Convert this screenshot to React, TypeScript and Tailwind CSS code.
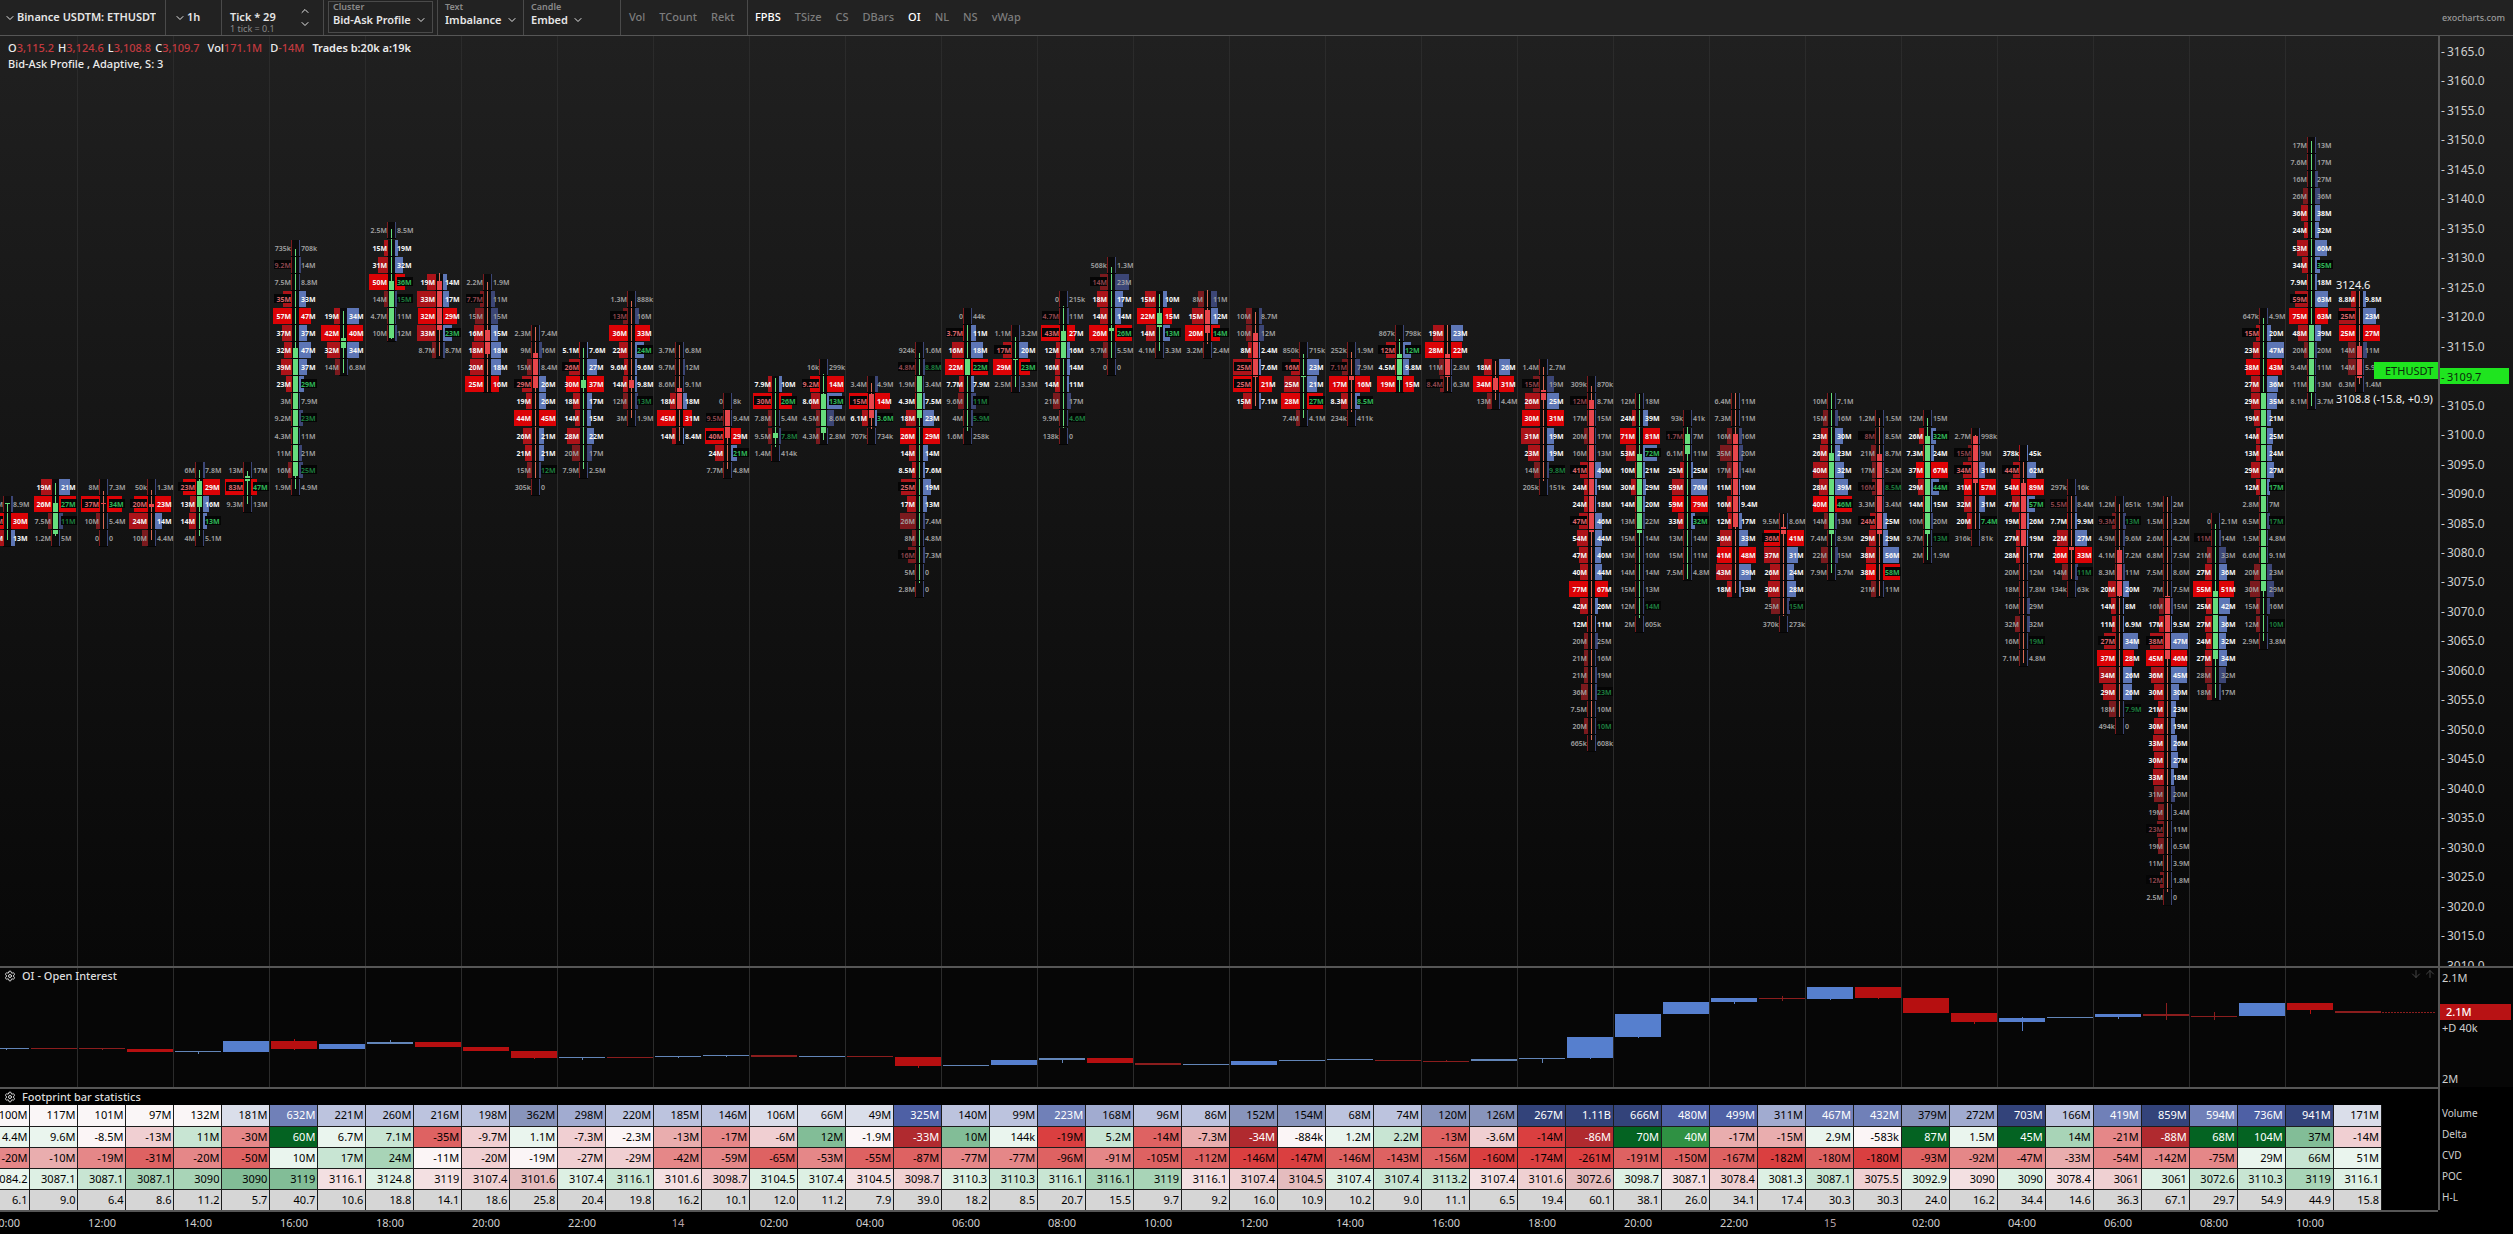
import { ArrowDown, ArrowUp, ChevronDown, ChevronUp, Settings } from "lucide-react";

const CELL = 48; // one hourly bar
const FIRST = -18; // left edge of the first, half hidden bar
const ROW = 17.09; // height of one price bucket
const ROW_TOP = 109; // centre of the highest bucket

const cellLeft = (i: number) => FIRST + i * CELL;
const barCenter = (i: number) => cellLeft(i) + 25;

interface Bar {
  row: number;
  up: boolean;
  body: [number, number];
  wick: [number, number];
  cells: string;
}

const bar = (
  row: number,
  dir: "u" | "d",
  b0: number,
  b1: number,
  w0: number,
  w1: number,
  cells: string
): Bar => ({ row, up: dir === "u", body: [b0, b1], wick: [w0, w1], cells });

/**
 * bid/ask per bucket, in millions unless the value ends with k
 * "*" point of control, "." outside the value area, "!" imbalance
 */
const BARS: Bar[] = [
  bar(21, "u", 467, 468, 467, 504, ".6.1/8.9 *8.2!/30 14/13"),
  bar(20, "u", 467, 498, 447, 500, "19/21 *26/27! .7.5/11! .1.2/5"),
  bar(20, "d", 467, 468, 455, 493, ".8/7.3 *37!/34! .10/5.4 .0/0"),
  bar(20, "d", 468, 471, 454, 504, ".50k/1.3 *20!/23 24/14 .10/4.4"),
  bar(19, "u", 445, 471, 434, 500, ".6/7.8 *23!/29 13/16 14/13! .4/5.1"),
  bar(19, "u", 440, 445, 435, 468, ".13/17 *83!/47! .9.3/13"),
  bar(6, "u", 312, 440, 213, 453, ".735k/708k .9.2!/14 .7.5/8.8 35!/33 *57/47 37/37 32/47 39/37 23/29! .3/7.9 .9.2/23! .4.3/11 .11/21 .16/25! .1.9/4.9"),
  bar(10, "u", 302, 312, 275, 337, "19/34 *42/40 32/34 .14/6.8"),
  bar(5, "u", 245, 302, 193, 303, ".2.5/8.5 15/19 31/32 *50/36! .14/15! .4.7/11 .10/12"),
  bar(8, "d", 245, 294, 237, 320, "19/14 33/17 *32/29 33/23! .8.7/8.7"),
  bar(8, "d", 294, 318, 246, 356, ".2.2/1.9 .7.7!/11 .15/15 16/15 18/18 20/18 *25/16"),
  bar(11, "d", 317, 352, 291, 443, ".2.3/7.4 .9/16 .15/8.4 29!/26 19/26 *44/45 26/21 21/21 .15/12! .305k/0"),
  bar(12, "u", 344, 352, 312, 433, "5.1/7.6 26!/27 *30/37 18/17 14/15 28/22 .20/17 .7.9/2.5"),
  bar(9, "d", 344, 352, 265, 382, ".1.3/888k .13!/16 *36/33 22/24! 9.6/9.6 14/9.8 .12/13! .3/1.9"),
  bar(12, "d", 352, 373, 309, 405, ".3.7/6.8 .9.7/12 .8.6/9.1 18/18 *45/31 14/8.4"),
  bar(15, "d", 374, 402, 374, 433, ".0/8k .9.5!/9.4 *40!/29 24/21! .7.7/4.8"),
  bar(14, "u", 397, 402, 342, 411, "7.9/10 *30!/26! .7.8/5.4 .9.5/7.8! .1.4/414k"),
  bar(13, "u", 358, 397, 338, 404, ".16k/299k *9.2!/14 8.6/13! .4.5/8.6 .4.3/2.8"),
  bar(14, "d", 358, 382, 347, 393, ".3.4/4.9 *15!/14 6.1/3.6! .707k/734k"),
  bar(12, "u", 340, 382, 317, 547, ".924k/1.6 .4.8!/8.8! .1.9/3.4 4.3/7.5 18/23 *26/29 14/14 8.5/7.6 25!/19 17/13 .26/7.4 .8/4.8 .16!/7.3 .5/0 .2.8/0"),
  bar(10, "u", 323, 339, 289, 395, ".0/44k 3.7!/11 16/18 *22/22! 7.7/7.9 .9.6/11! .4/5.9! .1.6/258k"),
  bar(11, "u", 322, 324, 301, 351, ".1.1/3.2 17!/20 *29/23! .2.5/3.3"),
  bar(9, "u", 295, 322, 270, 392, ".0/215k .4.7!/11 *43!/27 12/16 16/14 14/11 .21/17 .9.9/4.6! .138k/0"),
  bar(7, "u", 292, 295, 231, 322, ".568k/1.3 .14!/23 18/17 14/14 *26/26! .9.7/5.5 .0/0"),
  bar(9, "u", 277, 291, 258, 315, "15/10 *22/15 14/13! .4.1/3.3"),
  bar(9, "d", 274, 297, 254, 308, ".8/11 15/12 *20/14! .3.2/2.4"),
  bar(10, "d", 297, 341, 276, 370, ".10/8.7 .10/12 8/2.4 25!/7.6 *25!/21 15/7.1"),
  bar(12, "u", 339, 341, 318, 382, ".850k/715k 16!/23 25/21 *28/27! .7.4/4.1"),
  bar(12, "d", 340, 344, 316, 376, ".252k/1.9 .7.1!/7.9 *17/16 8.3/8.5! .234k/411k"),
  bar(11, "u", 318, 344, 303, 356, ".867k/798k 12!/12! 4.5/9.8 *19/15"),
  bar(11, "d", 318, 341, 289, 355, "19/23 *28/22 .11/2.8 .8.4!/6.3"),
  bar(13, "d", 342, 354, 325, 364, "18/26 *34/31 .13/4.4"),
  bar(13, "d", 354, 364, 331, 445, ".1.4/2.7 .15!/19 26/25 *30/31 31/19 23/19 .14/9.8! .205k/151k"),
  bar(14, "d", 364, 496, 350, 704, ".309k/870k .12!/8.7 .17/15 .20/17 .16/13 41!/40 24/19 24/18 47!/46 54/44 47/40 40/44 *77/67 42/26 12/11 .20/25 .21/16 .21/19 .36/23! .7.5/10 .20/10! .665k/608k"),
  bar(15, "u", 418, 497, 358, 582, ".12/18 24/39 *71/81 53/72! 10/21 30/29 14/20 .13/22 .15/14 .13/10 .14/14 .15/13 .12/14! .2/605k"),
  bar(16, "u", 398, 418, 391, 543, ".93k/41k .1.7!/7 .6.1/11 25/25 59/76 *59/79 33/32! .13/14 .15/11 .7.5/4.8"),
  bar(15, "d", 398, 491, 357, 557, ".6.4/11 .7.3/11 .16/16 .35/20 .17/14 11/10 16/9.4 12/17 36/33 *41/48 43/39 18/13"),
  bar(22, "d", 491, 498, 478, 580, ".9.5/8.6 *36!/41 37/31 26/24 30/28 .25/15! .370k/273k"),
  bar(15, "u", 417, 498, 357, 537, ".10/7.1 .15/16 23/30 26/23 40/32 28/39 *40/46! .14/13 .7.4/8.9 .22/15 .7.9/3.7"),
  bar(16, "d", 418, 498, 382, 560, ".1.2/1.5 .8!/8.5 .21/8.7 .17/5.2 .16!/8.5! .3.3/3.4 24!/25 29/29 38/56 *38/58! .21/11"),
  bar(16, "u", 400, 498, 382, 524, ".12/15 26/32! 7.3/24 *37/67 29/44! 14/15 .10/20 .9.7/13! .2/1.9"),
  bar(17, "d", 400, 447, 399, 493, ".2.7/998k .15!/9 34!/31 *31/57 32/31 20/7.4! .316k/81k"),
  bar(18, "d", 447, 510, 425, 627, "378k/45k 44!/62 *54/89 47/57! 19/26 27/19 28/17 .20/12 .18/7.8 .16/29 .32/32 .16/19! .7.1/4.8"),
  bar(20, "d", 511, 514, 459, 543, ".297k/16k .5.5!/8.4 7.7/9.9 22/27 *26/33 .14/11! .134k/63k"),
  bar(21, "d", 514, 560, 468, 682, ".1.2/651k .9.3!/13! .4.9/9.6 .4.1/7.2 .8.3/11 20/20 14/8 11/6.9 27!/34 *37/28 34/26 29/26 .18/7.9! .494k/0"),
  bar(21, "d", 560, 623, 461, 856, ".1.9/2 .1.5/3.2 .2.6/4.2 .6.8/7.5 .7.5/8.6 .7/7.5 .16/15 17/9.5 38!/47 *45/46 36/45 30/30 21/23 30/19 33/26 30/27 33/18 .31/20 .19/3.4 .23!/11 .19/6.5 .11/3.9 .12!/1.8 .2.5/0"),
  bar(22, "u", 555, 623, 488, 662, ".0/2.1 .11!/14 .21/33 27/36 *55/51 25/42 27/36 24/32 27/34 .28/32 .18/17"),
  bar(10, "u", 357, 555, 282, 605, ".647k/4.9 15!/20 23/47 *38/43 27/36 29/35 19/21 14/25 13/24 29/27 12/17! .2.8/7 .6.5/17! .1.5/4.8 .6.6/9.1 .20/23 .30/29 .15/16 .12/10! .2.9/3.8"),
  bar(0, "u", 289, 356, 105, 370, ".17/13 .7.6/17 .16/27 .26/36 36/38 24/32 53/60 34/35! 7.9/18 59!/63 *75/63 48/39 .20/20 .9.4/11 .11/13 .8.1/3.7"),
  bar(9, "d", 310, 342, 255, 348, "8.8/9.8 25!/23 *25/27 .14/11 .14/5.9 .6.3/1.4"),
];

// open interest candles: direction, top, bottom, wick top, wick bottom
type Candle = ["u" | "d", number, number, number?, number?];

const OI: Candle[] = [
  ["u", 80, 81, 80, 82], ["d", 80, 81], ["d", 80, 81, 80, 82], ["d", 81, 84], ["u", 83, 84, 83, 86],
  ["u", 73, 84], ["d", 73, 81, 71, 82], ["u", 76, 81], ["u", 74, 76, 72, 76], ["d", 74, 79],
  ["d", 79, 83], ["d", 83, 90, 83, 91], ["u", 89, 90, 89, 92], ["d", 89, 90], ["u", 88, 89, 88, 90],
  ["u", 87, 88, 87, 89], ["d", 87, 89], ["u", 88, 89], ["d", 88, 89], ["d", 89, 98, 89, 100],
  ["u", 97, 98], ["u", 92, 97], ["u", 90, 92, 90, 95], ["d", 90, 95], ["d", 95, 97],
  ["u", 96, 97], ["u", 93, 97], ["u", 92, 93], ["u", 91, 92], ["d", 92, 93],
  ["d", 93, 94, 92, 94], ["u", 91, 93], ["u", 90, 91, 90, 95], ["u", 69, 90, 69, 91], ["u", 46, 69, 46, 70],
  ["u", 34, 46], ["u", 30, 34, 30, 36], ["d", 30, 31, 28, 33], ["u", 19, 31, 19, 32], ["d", 19, 30, 19, 31],
  ["d", 30, 45], ["d", 45, 54, 45, 56], ["u", 50, 54, 49, 63], ["u", 49, 50], ["u", 46, 49, 46, 51],
  ["d", 46, 48, 35, 52], ["d", 48, 49, 44, 52], ["u", 35, 48], ["d", 35, 42, 35, 46], ["d", 43, 45],
];

const TONES: Record<string, string> = {
  v0: "bg-[#faf6f7] text-black",
  v1: "bg-[#dadeea] text-black",
  v2: "bg-[#bcc3de] text-black",
  v3: "bg-[#a1abd0] text-black",
  v4: "bg-[#8894bb] text-black",
  v5: "bg-[#7080b8] text-white",
  v6: "bg-[#4e60a5] text-white",
  v7: "bg-[#33437a] text-white",
  g0: "bg-[#eaf5ee] text-black",
  g1: "bg-[#c8e5d3] text-black",
  g2: "bg-[#a8d4b7] text-black",
  g3: "bg-[#82bd97] text-black",
  g5: "bg-[#2f9143] text-white",
  g6: "bg-[#046322] text-white",
  r0: "bg-[#fbf5f6] text-black",
  r1: "bg-[#f0cfd2] text-black",
  r2: "bg-[#e9adae] text-black",
  r3: "bg-[#e58788] text-black",
  r4: "bg-[#de6262] text-black",
  r5: "bg-[#da3f40] text-black",
  r6: "bg-[#b02a2f] text-white",
  p0: "bg-[#f3e0e2] text-black",
  p1: "bg-[#efd0d2] text-black",
  p2: "bg-[#e4bcbe] text-black",
  q0: "bg-[#ddf0e4] text-black",
  h0: "bg-[#d6d6d6] text-black",
};

const STATS = [
  {
    label: "Volume",
    values:
      "100M:v0 117M:v0 101M:v0 97M:v0 132M:v0 181M:v1 632M:v5 221M:v2 260M:v2 216M:v2 198M:v2 362M:v4 298M:v3 220M:v2 185M:v2 146M:v2 106M:v1 66M:v1 49M:v1 325M:v6 140M:v2 99M:v2 223M:v5 168M:v3 96M:v2 86M:v2 152M:v4 154M:v4 68M:v2 74M:v2 120M:v4 126M:v4 267M:v7 1.11B:v7 666M:v7 480M:v6 499M:v6 311M:v3 467M:v5 432M:v5 379M:v4 272M:v3 703M:v7 166M:v2 419M:v5 859M:v7 594M:v5 736M:v6 941M:v7 171M:v1",
  },
  {
    label: "Delta",
    values:
      "4.4M:g0 9.6M:g0 -8.5M:r0 -13M:r1 11M:g1 -30M:r3 60M:g6 6.7M:g0 7.1M:g1 -35M:r4 -9.7M:r1 1.1M:g0 -7.3M:r1 -2.3M:r0 -13M:r2 -17M:r3 -6M:r1 12M:g3 -1.9M:r0 -33M:r6 10M:g3 144k:g0 -19M:r5 5.2M:g1 -14M:r4 -7.3M:r2 -34M:r6 -884k:r0 1.2M:g0 2.2M:g1 -13M:r4 -3.6M:r1 -14M:r5 -86M:r6 70M:g6 40M:g5 -17M:r2 -15M:r2 2.9M:g0 -583k:r0 87M:g6 1.5M:g0 45M:g6 14M:g2 -21M:r3 -88M:r6 68M:g6 104M:g6 37M:g3 -14M:r1",
  },
  {
    label: "CVD",
    values:
      "-20M:r3 -10M:r2 -19M:r3 -31M:r4 -20M:r3 -50M:r4 10M:g0 17M:g1 24M:g2 -11M:r0 -20M:r1 -19M:r0 -27M:r1 -29M:r1 -42M:r3 -59M:r3 -65M:r4 -53M:r3 -55M:r4 -87M:r4 -77M:r3 -77M:r3 -96M:r4 -91M:r3 -105M:r4 -112M:r4 -146M:r5 -147M:r5 -146M:r4 -143M:r4 -156M:r4 -160M:r5 -174M:r5 -261M:r5 -191M:r4 -150M:r4 -167M:r4 -182M:r5 -180M:r4 -180M:r5 -93M:r4 -92M:r3 -47M:r3 -33M:r2 -54M:r3 -142M:r3 -75M:r3 29M:g0 66M:g1 51M:g0",
  },
  {
    label: "POC",
    values:
      "3084.2:g0 3087.1:q0 3087.1:g1 3087.1:g2 3090:g2 3090:g3 3119:g3 3116.1:p0 3124.8:q0 3119:p0 3107.4:p1 3101.6:p2 3107.4:q0 3116.1:g1 3101.6:p0 3098.7:p1 3104.5:q0 3107.4:q0 3104.5:p0 3098.7:p1 3110.3:q0 3110.3:g1 3116.1:g1 3116.1:g2 3119:g2 3116.1:p0 3107.4:p1 3104.5:p2 3107.4:q0 3107.4:g1 3113.2:g1 3107.4:p0 3101.6:p1 3072.6:p2 3098.7:q0 3087.1:p0 3078.4:p1 3081.3:q0 3087.1:g1 3075.5:p1 3092.9:q0 3090:p0 3090:q0 3078.4:p0 3061:p1 3061:q0 3072.6:g1 3110.3:g1 3119:g2 3116.1:q0",
  },
  {
    label: "H-L",
    values:
      "6.1:h0 9.0:h0 6.4:h0 8.6:h0 11.2:h0 5.7:h0 40.7:h0 10.6:h0 18.8:h0 14.1:h0 18.6:h0 25.8:h0 20.4:h0 19.8:h0 16.2:h0 10.1:h0 12.0:h0 11.2:h0 7.9:h0 39.0:h0 18.2:h0 8.5:h0 20.7:h0 15.5:h0 9.7:h0 9.2:h0 16.0:h0 10.9:h0 10.2:h0 9.0:h0 11.1:h0 6.5:h0 19.4:h0 60.1:h0 38.1:h0 26.0:h0 34.1:h0 17.4:h0 30.3:h0 30.3:h0 24.0:h0 16.2:h0 34.4:h0 14.6:h0 36.3:h0 67.1:h0 29.7:h0 54.9:h0 44.9:h0 15.8:h0",
  },
];

const TIMES = [
  "10:00", "12:00", "14:00", "16:00", "18:00", "20:00", "22:00", "14", "02:00", "04:00", "06:00", "08:00", "10:00",
  "12:00", "14:00", "16:00", "18:00", "20:00", "22:00", "15", "02:00", "04:00", "06:00", "08:00", "10:00",
];

const PRICES = Array.from({ length: 32 }, (_, i) => 3165 - i * 5).filter((p) => p !== 3110);
const priceY = (p: number) => Math.round(15 + (3165 - p) * 5.894);

const OVERLAYS = ["Vol", "TCount", "Rekt"];

const INDICATORS = [
  ["FPBS", true], ["TSize", false], ["CS", false], ["DBars", false], ["OI", true], ["NL", false], ["NS", false], ["vWap", false],
] as const;

const unit = (v: string) => (v === "0" || v.endsWith("k") ? v : `${v}M`);
const amount = (v: string) => (v.endsWith("k") ? parseFloat(v) / 1000 : parseFloat(v));

function GridLines() {
  return (
    <g fill="#2b2b2b">
      {Array.from({ length: 24 }, (_, i) => (
        <rect key={i} x={cellLeft(2 + i * 2) - 1} y={0} width={1} height="100%" />
      ))}
    </g>
  );
}

function Footprint({ data, index }: { data: Bar; index: number }) {
  const cx = barCenter(index);
  const rows = data.cells.split(" ").map((cell) => {
    const poc = cell.startsWith("*");
    const out = cell.startsWith(".");
    const [bid, ask] = cell.replace(/^[*.]/, "").split("/");
    return {
      poc,
      out,
      bid: bid.replace("!", ""),
      ask: ask.replace("!", ""),
      bidHot: bid.endsWith("!"),
      askHot: ask.endsWith("!"),
    };
  });
  const max = Math.max(...rows.flatMap((r) => [amount(r.bid), amount(r.ask)]));
  const size = (v: string) => {
    const part = amount(v) / Math.max(max, 12);
    return Math.round(17 * part ** 1.7);
  };
  const candle = data.up ? "#66dd7c" : "#e8454b";
  const wick = data.up ? "#66dd7c" : "#d86a55";

  return (
    <g>
      {rows.map((r, i) => {
        const y = Math.round(ROW_TOP + (data.row + i) * ROW);
        const left = size(r.bid);
        const right = size(r.ask);
        const text = r.out ? "#a3a3a3" : "#f6f6f6";
        const weight = r.out ? 600 : 700;
        return (
          <g key={i} fontWeight={weight}>
            <rect x={cx - 4} y={y - 8} width={8} height={16} fill="#0b0b0b" />
            <rect x={cx - 4 - (left > 1 ? left + 1 : 0)} y={y - 8} width={left > 1 ? left + 2 : 1} height={16} fill={r.poc ? "#dc0306" : r.out ? "#7b1a1e" : "#ac1319"} />
            <rect x={cx + 4} y={y - 8} width={Math.max(right, 1)} height={16} fill={r.poc && right > 1 ? "#dc0306" : r.out ? "#3c4676" : "#5d76b6"} />
            {r.bidHot && <rect x={cx - 21} y={y - 5} width={17} height={9} fill="#050505" />}
            {r.askHot && <rect x={cx + 6} y={y - 5} width={16} height={9} fill="#050505" />}
            <text x={cx - 4} y={y + 3} textAnchor="end" fill={r.bidHot ? (r.out ? "#964a52" : "#d8666a") : text}>
              {unit(r.bid)}
            </text>
            <text x={cx + 6} y={y + 3} fill={r.askHot ? (r.out ? "#1f8442" : "#2fb558") : text}>
              {unit(r.ask)}
            </text>
          </g>
        );
      })}
      <rect x={cx} y={data.wick[0]} width={1} height={data.wick[1] - data.wick[0]} fill={wick} />
      <rect x={cx - 2} y={data.body[0]} width={5} height={data.body[1] - data.body[0]} fill={candle} />
      {rows.map((_, i) => (
        <rect key={i} x={cx - 4} y={Math.round(ROW_TOP + (data.row + i) * ROW) + 8} width={9} height={1} fill="#050505" />
      ))}
    </g>
  );
}

function FootprintChart() {
  return (
    <svg className="block h-full w-full" fontSize={7}>
      <GridLines />
      {BARS.map((b, i) => (
        <Footprint key={i} data={b} index={i} />
      ))}
      <g fontSize={11} fill="#f2f2f2">
        <text x={2336} y={253}>3124.6</text>
        <text x={2336} y={367}>3108.8 (-15.8, +0.9)</text>
      </g>
      <rect x={2374} y={326} width={80} height={17} fill="#1fe41f" />
      <text x={2385} y={339} fontSize={11} fill="#0b2a0b">ETHUSDT</text>
    </svg>
  );
}

function PriceAxis() {
  return (
    <svg className="block h-full w-full" fontSize={12} fill="#cfcfcf">
      {PRICES.map((p) => (
        <text key={p} x={1} y={priceY(p) + 5}>
          - <tspan x={7}>{p.toFixed(1)}</tspan>
        </text>
      ))}
      <rect x={0} y={332} width={69} height={16} fill="#1fe41f" />
      <text x={1} y={345} fill="#0b2a0b" fontSize={11}>
        - <tspan x={7}>3109.7</tspan>
      </text>
    </svg>
  );
}

function OpenInterestChart() {
  return (
    <svg className="block h-full w-full">
      <GridLines />
      {OI.map(([dir, top, bottom, w0, w1], i) => {
        const x = cellLeft(i) + 1;
        const thin = bottom - top < 3;
        const fill = dir === "u" ? (thin ? "#6285b8" : "#567fce") : thin ? "#8b1d1d" : "#b60f10";
        return (
          <g key={i} fill={fill}>
            <rect x={x} y={top} width={46} height={bottom - top} />
            {w0 !== undefined && w1 !== undefined && <rect x={x + 23} y={w0} width={1} height={w1 - w0} />}
          </g>
        );
      })}
      <line x1={2382} x2={2435} y1={44.5} y2={44.5} stroke="#8b1d1d" strokeDasharray="2 1" />
    </svg>
  );
}

function ToolSelect({ label, value, boxed }: { label: string; value: string; boxed?: boolean }) {
  return (
    <label className={`flex h-8 flex-col px-1 leading-3 ${boxed ? "border border-[#4a4a4a]" : "border border-transparent"}`}>
      <span className="text-[9px] leading-[10px] text-[#8a8a8a]">{label}</span>
      <span className="flex items-center gap-1">
        <select className="appearance-none bg-transparent leading-4 outline-none">
          <option>{value}</option>
        </select>
        <ChevronDown className="h-3 w-3" />
      </span>
    </label>
  );
}

function Toolbar() {
  return (
    <header className="flex h-9 shrink-0 items-stretch border-b border-[#565656] bg-[#222222] text-[11px] font-semibold text-[#e6e6e6]">
      <label className="flex w-[166px] items-center gap-px border-r border-[#4a4a4a] pl-1">
        <ChevronDown className="h-3 w-3" />
        <select aria-label="Symbol" className="appearance-none bg-transparent outline-none">
          <option>Binance USDTM: ETHUSDT</option>
        </select>
      </label>
      <label className="flex w-14 items-center gap-px border-r border-[#4a4a4a] pl-2">
        <ChevronDown className="h-3 w-3" />
        <select aria-label="Timeframe" className="appearance-none bg-transparent outline-none">
          <option>1h</option>
        </select>
      </label>
      <div className="flex w-[102px] items-stretch justify-between border-r border-[#4a4a4a] pr-3 pl-2">
        <div className="flex flex-col justify-end leading-3">
          <span>Tick * 29</span>
          <span className="text-[9px] font-normal text-[#8a8a8a]">1 tick = 0.1</span>
        </div>
        <div className="flex flex-col justify-center gap-px">
          <button aria-label="More ticks"><ChevronUp className="h-3 w-3" /></button>
          <button aria-label="Fewer ticks"><ChevronDown className="h-3 w-3" /></button>
        </div>
      </div>
      <div className="w-[114px] border-r border-[#4a4a4a] px-1 pt-px">
        <ToolSelect label="Cluster" value="Bid-Ask Profile" boxed />
      </div>
      <div className="w-[86px] border-r border-[#4a4a4a] pt-px pl-0.5">
        <ToolSelect label="Text" value="Imbalance" />
      </div>
      <div className="w-[97px] border-r border-[#4a4a4a] pt-px pl-0.5">
        <ToolSelect label="Candle" value="Embed" />
      </div>
      <nav className="flex w-[127px] items-center gap-[14px] border-r border-[#4a4a4a] pl-2 font-medium">
        {OVERLAYS.map((name) => (
          <button key={name} className="text-[#7d7d7d]">{name}</button>
        ))}
      </nav>
      <nav className="flex items-center gap-[14px] pl-[7px] font-medium">
        {INDICATORS.map(([name, on]) => (
          <button key={name} aria-pressed={on} className={on ? "text-white" : "text-[#7d7d7d]"}>{name}</button>
        ))}
      </nav>
      <a href="#" className="mr-2 ml-auto self-center text-[9px] font-medium text-[#9a9a9a]">exocharts.com</a>
    </header>
  );
}

function Legend() {
  const values = [["O", "3,115.2"], ["H", "3,124.6"], ["L", "3,108.8"], ["C", "3,109.7"]];
  return (
    <div className="absolute top-1 left-2 text-[11px] leading-4 font-medium text-[#ececec]">
      <p className="flex gap-1">
        {values.map(([k, v]) => (
          <span key={k}>{k}<span className="text-[#c23a3f]">{v}</span></span>
        ))}
        <span className="ml-1">Vol<span className="text-[#c23a3f]">171.1M</span></span>
        <span className="ml-1">D<span className="text-[#c23a3f]">-14M</span></span>
        <span className="ml-1 font-semibold">Trades b:20k a:19k</span>
      </p>
      <p>Bid-Ask Profile , Adaptive, S: 3</p>
    </div>
  );
}

export default function App() {
  return (
    <div className="flex h-screen flex-col overflow-hidden bg-black font-['Noto_Sans','Open_Sans',sans-serif]">
      <Toolbar />

      {/* Price pane */}
      <section className="flex min-h-0 flex-1 bg-linear-to-b from-[#202020] to-[#080808]">
        <div className="relative min-w-0 flex-1 overflow-hidden">
          <FootprintChart />
          <Legend />
        </div>
        <div className="w-[75px] shrink-0 border-l-2 border-[#565656]">
          <PriceAxis />
        </div>
      </section>

      {/* Open interest pane */}
      <section className="flex h-[121px] shrink-0 border-t-2 border-[#565656] bg-[#060606]">
        <div className="relative min-w-0 flex-1 overflow-hidden">
          <OpenInterestChart />
          <h2 className="absolute top-0 left-1 flex items-center gap-1.5 text-[11px] leading-4 font-medium text-[#dcdcdc]">
            <Settings className="h-3 w-3" />
            OI - Open Interest
          </h2>
          <div className="absolute top-0 right-0.5 flex gap-0.5 text-[#444444]">
            <ArrowDown className="h-3 w-3" />
            <ArrowUp className="h-3 w-3" />
          </div>
        </div>
        <div className="flex w-[75px] shrink-0 flex-col border-l-2 border-[#565656] text-[11px] leading-4 text-[#cfcfcf]">
          <span className="pt-0.5 pl-0.5">2.1M</span>
          <span className="mt-[18px] mr-0.5 bg-[#b81214] pl-1.5 font-medium text-white">2.1M</span>
          <span className="pl-0.5">+D 40k</span>
          <span className="mt-auto pl-0.5">2M</span>
        </div>
      </section>

      {/* Footprint statistics pane */}
      <section className="flex h-[123px] shrink-0">
        <div className="min-w-0 flex-1 overflow-hidden border-t-2 border-[#565656]">
          <h2 className="flex h-4 items-center gap-1.5 pl-1 text-[11px] leading-4 font-medium text-[#dcdcdc]">
            <Settings className="h-3 w-3" />
            Footprint bar statistics
          </h2>
          <table className="-ml-[18px] w-[2400px] table-fixed border-collapse text-[11px]">
            <tbody>
              {STATS.map((row) => (
                <tr key={row.label} className="h-[21px]">
                  {row.values.split(" ").map((cell, i) => {
                    const [value, tone] = cell.split(":");
                    return (
                      <td key={i} className={`border-r border-b border-[#1c1c1c] p-0 pr-0.5 text-right leading-5 ${TONES[tone]}`}>
                        {value}
                      </td>
                    );
                  })}
                </tr>
              ))}
            </tbody>
          </table>
        </div>
        <div className="flex w-[75px] shrink-0 flex-col border-l-2 border-[#565656] pt-4 text-[10px] leading-[21px] text-[#cfcfcf]">
          {STATS.map((row) => (
            <span key={row.label} className="pl-0.5">{row.label}</span>
          ))}
        </div>
      </section>

      {/* Time axis */}
      <footer className="flex h-6 shrink-0 bg-black">
        <div className="min-w-0 flex-1 overflow-hidden border-t-2 border-[#565656]">
          <div className="-ml-[42px] flex w-[2400px] text-[11px] leading-[21px] text-[#cfcfcf]">
            {TIMES.map((t, i) => (
              <span key={i} className={`w-24 shrink-0 text-center ${t.includes(":") ? "" : "text-[#b9a3a8]"}`}>{t}</span>
            ))}
          </div>
        </div>
        <div className="w-[75px] shrink-0" />
      </footer>
    </div>
  );
}
